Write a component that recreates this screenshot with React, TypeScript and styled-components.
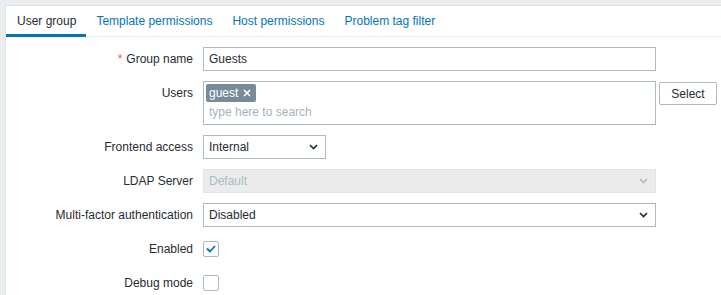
import React from 'react';
import styled, { createGlobalStyle } from 'styled-components';

const GlobalStyle = createGlobalStyle`
  body {
    margin: 0;
    background: #ebeef0;
    font-family: Arial, "Liberation Sans", sans-serif;
    font-size: 12px;
    color: #1f2c33;
  }
`;

const Page = styled.div`
  padding: 5px 0 0 5px;
  height: 290px;
  overflow: hidden;
`;

const Panel = styled.div`
  background: #ffffff;
  border: 1px solid #dfe4e7;
  border-right: none;
  height: 300px;
`;

const TabBar = styled.div`
  display: flex;
  height: 30px;
  padding-left: 1px;
  border-bottom: 1px solid #ebeef0;
`;

const Tab = styled.div<{ $active?: boolean }>`
  display: flex;
  align-items: center;
  padding: 2px 10px 0 10px;
  color: ${p => (p.$active ? '#1f2c33' : '#0275b8')};
  border-bottom: 3px solid ${p => (p.$active ? '#0275b8' : 'transparent')};
  margin-bottom: -1px;
  cursor: pointer;

  &:first-child {
    margin-left: -1px;
    padding-left: 11px;
  }
`;

const Form = styled.div`
  display: grid;
  grid-template-columns: 187px 1fr;
  column-gap: 10px;
  row-gap: 10px;
  padding-top: 10px;
`;

const Label = styled.label<{ $top?: boolean }>`
  display: flex;
  justify-content: flex-end;
  align-items: ${p => (p.$top ? 'flex-start' : 'center')};
  height: ${p => (p.$top ? 'auto' : '24px')};
  padding-top: ${p => (p.$top ? '5px' : '0')};
  line-height: 14px;
`;

const Asterisk = styled.span`
  color: #e45959;
  margin-right: 4px;
`;

const Field = styled.div`
  display: flex;
  align-items: flex-start;
  gap: 3px;
  min-height: 24px;
`;

const TextBox = styled.div<{ $width: number; $disabled?: boolean }>`
  box-sizing: border-box;
  width: ${p => p.$width}px;
  height: 24px;
  display: flex;
  align-items: center;
  justify-content: space-between;
  padding: 0 7px 0 5px;
  border: 1px solid ${p => (p.$disabled ? '#dfe4e7' : '#acbbc2')};
  background: ${p => (p.$disabled ? '#ebebeb' : '#ffffff')};
  color: ${p => (p.$disabled ? '#acbbc2' : '#1f2c33')};
`;

const MultiSelect = styled.div`
  box-sizing: border-box;
  width: 453px;
  height: 44px;
  border: 1px solid #acbbc2;
  background: #ffffff;
  padding: 2px 2px 0 2px;
`;

const Tag = styled.span`
  display: inline-flex;
  align-items: center;
  gap: 5px;
  height: 18px;
  padding: 0 5px 0 3px;
  border-radius: 2px;
  background: #768d99;
  color: #ffffff;
`;

const Placeholder = styled.div`
  color: #a5b3bb;
  padding: 3px 0 0 3px;
`;

const Button = styled.button`
  box-sizing: border-box;
  height: 23px;
  width: 58px;
  margin-top: 1px;
  border: 1px solid #acbbc2;
  border-radius: 2px;
  background: #ffffff;
  color: #1f2c33;
  font: inherit;
`;

const CheckRow = styled.div`
  display: flex;
  align-items: center;
  height: 24px;
`;

const Checkbox = styled.span`
  box-sizing: border-box;
  width: 16px;
  height: 16px;
  border: 1px solid #acbbc2;
  border-radius: 2px;
  background: #ffffff;
  display: flex;
  align-items: center;
  justify-content: center;
`;

const Chevron = ({ color }: { color: string }) => (
  <svg width="9" height="6" viewBox="0 0 9 6">
    <path d="M1 1 L4.5 4.5 L8 1" fill="none" stroke={color} strokeWidth="1.6" />
  </svg>
);

const Cross = () => (
  <svg width="8" height="8" viewBox="0 0 8 8">
    <path d="M1 1 L7 7 M7 1 L1 7" stroke="#ffffff" strokeWidth="1.6" />
  </svg>
);

const Check = () => (
  <svg width="10" height="8" viewBox="0 0 10 8">
    <path d="M1 3.5 L4 6.5 L9 1" fill="none" stroke="#0275b8" strokeWidth="1.8" />
  </svg>
);

export default function App() {
  return (
    <Page>
      <GlobalStyle />
      <Panel>
        <TabBar>
          <Tab $active>User group</Tab>
          <Tab>Template permissions</Tab>
          <Tab>Host permissions</Tab>
          <Tab>Problem tag filter</Tab>
        </TabBar>
        <Form>
          <Label><Asterisk>*</Asterisk>Group name</Label>
          <Field>
            <TextBox $width={453}>Guests</TextBox>
          </Field>

          <Label $top>Users</Label>
          <Field>
            <MultiSelect>
              <Tag>guest <Cross /></Tag>
              <Placeholder>type here to search</Placeholder>
            </MultiSelect>
            <Button>Select</Button>
          </Field>

          <Label>Frontend access</Label>
          <Field>
            <TextBox $width={123}>Internal<Chevron color="#1f2c33" /></TextBox>
          </Field>

          <Label>LDAP Server</Label>
          <Field>
            <TextBox $width={453} $disabled>Default<Chevron color="#acbbc2" /></TextBox>
          </Field>

          <Label>Multi-factor authentication</Label>
          <Field>
            <TextBox $width={453}>Disabled<Chevron color="#1f2c33" /></TextBox>
          </Field>

          <Label>Enabled</Label>
          <CheckRow>
            <Checkbox><Check /></Checkbox>
          </CheckRow>

          <Label>Debug mode</Label>
          <CheckRow>
            <Checkbox />
          </CheckRow>
        </Form>
      </Panel>
    </Page>
  );
}
